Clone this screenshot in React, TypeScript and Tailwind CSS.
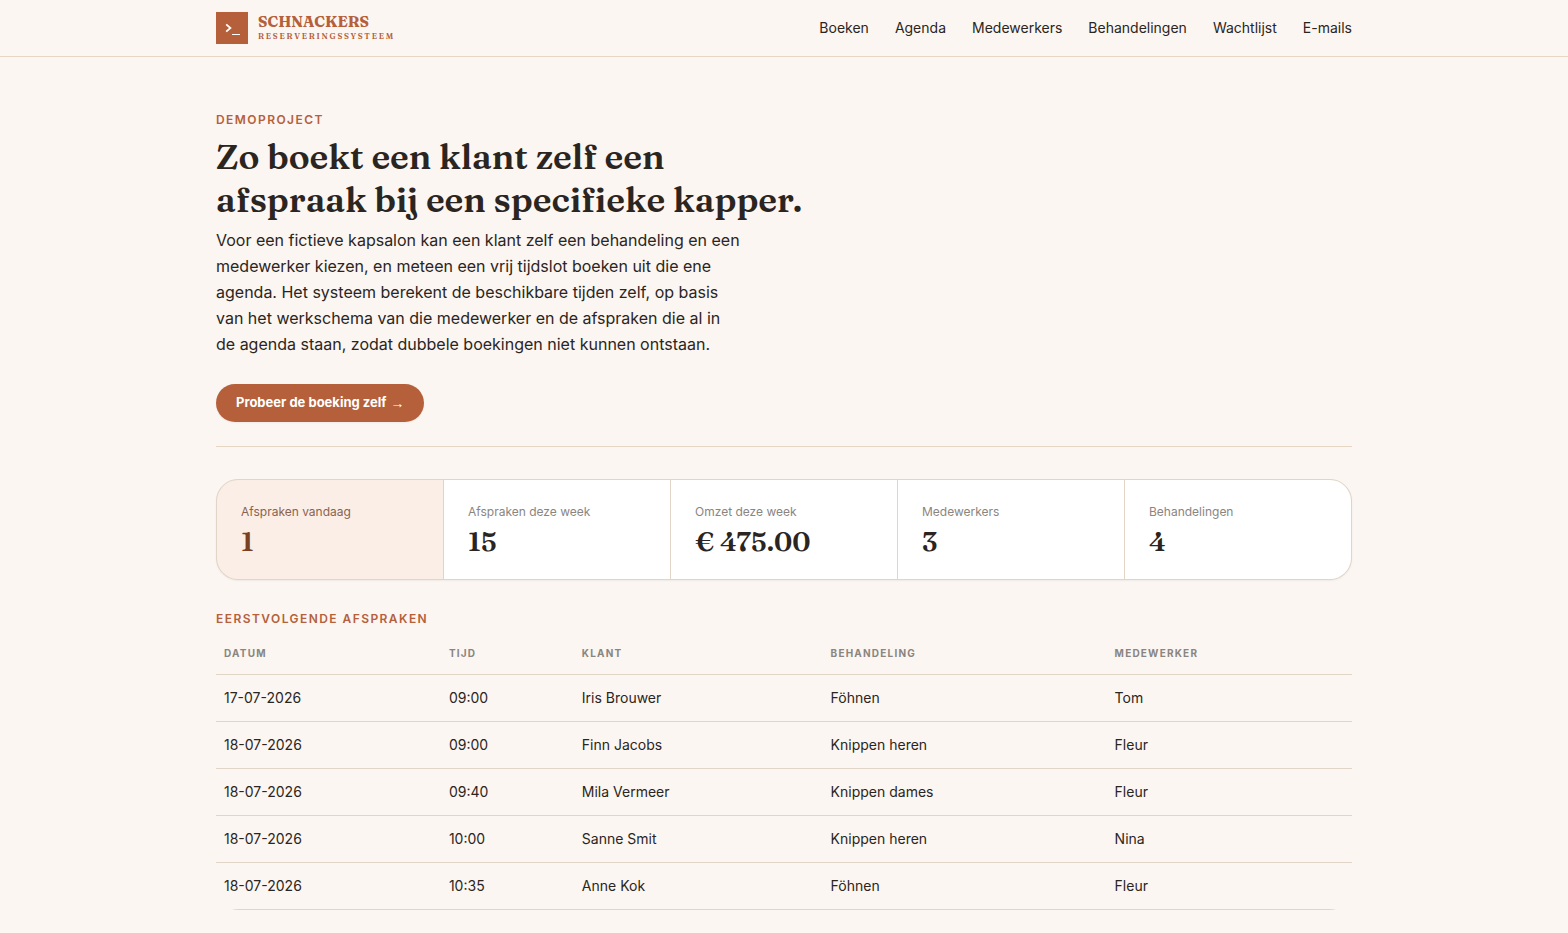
const navItems = ['Boeken', 'Agenda', 'Medewerkers', 'Behandelingen', 'Wachtlijst', 'E-mails'];

const stats = [
  { label: 'Afspraken vandaag', value: '1', active: true },
  { label: 'Afspraken deze week', value: '15' },
  { label: 'Omzet deze week', value: '€ 475.00' },
  { label: 'Medewerkers', value: '3' },
  { label: 'Behandelingen', value: '4' },
];

const columns = [
  { label: 'Datum', width: 'w-[19.8%]' },
  { label: 'Tijd', width: 'w-[11.7%]' },
  { label: 'Klant', width: 'w-[21.9%]' },
  { label: 'Behandeling', width: 'w-[25%]' },
  { label: 'Medewerker', width: 'w-[21.6%]' },
];

const appointments = [
  ['17-07-2026', '09:00', 'Iris Brouwer', 'Föhnen', 'Tom'],
  ['18-07-2026', '09:00', 'Finn Jacobs', 'Knippen heren', 'Fleur'],
  ['18-07-2026', '09:40', 'Mila Vermeer', 'Knippen dames', 'Fleur'],
  ['18-07-2026', '10:00', 'Sanne Smit', 'Knippen heren', 'Nina'],
  ['18-07-2026', '10:35', 'Anne Kok', 'Föhnen', 'Fleur'],
];

function Logo() {
  return (
    <svg className="size-8 shrink-0" viewBox="0 0 32 32" aria-hidden="true">
      <rect width="32" height="32" fill="#b5603a" />
      <path d="M10.2 12.4 L14.4 16 L10.2 19.6" fill="none" stroke="#fff" strokeWidth="1.8" />
      <path d="M16 22.5 H24" stroke="#fff" strokeWidth="1" />
    </svg>
  );
}

function Header() {
  return (
    <header className="border-b border-[#e6d6c5]">
      <div className="mx-auto flex max-w-[1136px] items-center justify-between py-3">
        <a href="#home" className="flex items-center gap-[10px] font-['Fraunces','Liberation_Serif',serif] text-[#b5603a]">
          <Logo />
          <span className="flex flex-col pb-[2px]">
            <span className="text-[15px] leading-[18px] font-bold">SCHNACKERS</span>
            <span className="text-[8px] leading-[10px] font-semibold tracking-[0.22em]">RESERVERINGSSYSTEEM</span>
          </span>
        </a>
        <nav className="flex gap-[26px] text-sm">
          {navItems.map((item) => (
            <a key={item} href={`#${item.toLowerCase()}`}>{item}</a>
          ))}
        </nav>
      </div>
    </header>
  );
}

function Hero() {
  return (
    <section className="border-b border-[#e6d6c5] pb-6">
      <p className="text-xs leading-5 font-semibold tracking-[0.12em] text-[#b5603a] uppercase">Demoproject</p>
      <h1 className="mt-[5px] max-w-[600px] font-['Fraunces','Liberation_Serif',serif] text-[35px] leading-[43px] font-semibold">
        Zo boekt een klant zelf een afspraak bij een specifieke kapper.
      </h1>
      <p className="mt-[6px] max-w-[526px] text-base leading-[26px]">
        Voor een fictieve kapsalon kan een klant zelf een behandeling en een medewerker kiezen, en meteen een vrij
        tijdslot boeken uit die ene agenda. Het systeem berekent de beschikbare tijden zelf, op basis van het
        werkschema van die medewerker en de afspraken die al in de agenda staan, zodat dubbele boekingen niet kunnen
        ontstaan.
      </p>
      <a
        href="#boeken"
        className="mt-[27px] inline-flex h-[38px] items-center gap-1 rounded-full bg-[#b5603a] px-5 text-[13px] font-bold text-white shadow-xs"
      >
        Probeer de boeking zelf <span className="font-['Liberation_Sans',sans-serif] text-sm font-normal">→</span>
      </a>
    </section>
  );
}

function Stats() {
  return (
    <dl className="mt-8 grid grid-cols-5 gap-px overflow-hidden rounded-[22px] border border-[#e1d5c7] bg-[#e1d5c7] shadow-xs">
      {stats.map(({ label, value, active }) => (
        <div key={label} className={active ? 'bg-[#fbeee6] p-6 text-[#7c3f22]' : 'bg-white p-6'}>
          <dt className={active ? 'text-xs text-[#8a6350]' : 'text-xs text-[#8a8580]'}>{label}</dt>
          <dd className="mt-2 font-['Fraunces','Liberation_Serif',serif] text-[27px] leading-[27px] font-semibold">{value}</dd>
        </div>
      ))}
    </dl>
  );
}

function Appointments() {
  return (
    <section className="mt-7">
      <h2 className="text-xs leading-[22px] font-semibold tracking-[0.12em] text-[#b5603a] uppercase">Eerstvolgende afspraken</h2>
      <div className="overflow-hidden rounded-[22px]">
        <table className="w-full border-collapse text-left">
          <thead>
            <tr className="border-b border-[#e1d5c7]">
              {columns.map(({ label, width }) => (
                <th
                  key={label}
                  className={`${width} px-2 pt-[14px] pb-3 text-[10px] leading-[18px] font-bold tracking-[0.12em] text-[#8a8580] uppercase`}
                >
                  {label}
                </th>
              ))}
            </tr>
          </thead>
          <tbody>
            {appointments.map((row, index) => (
              <tr key={index} className="border-b border-[#e1d5c7]">
                {row.map((cell, i) => (
                  <td key={i} className="px-2 py-3 text-sm leading-[22px]">{cell}</td>
                ))}
              </tr>
            ))}
          </tbody>
        </table>
      </div>
    </section>
  );
}

export default function App() {
  return (
    <div className="min-h-screen bg-[#fbf6f2] font-['Inter',sans-serif] text-[#2b2521]">
      <Header />
      <main className="mx-auto max-w-[1136px] pt-[53px] pb-6">
        <Hero />
        <Stats />
        <Appointments />
      </main>
    </div>
  );
}
